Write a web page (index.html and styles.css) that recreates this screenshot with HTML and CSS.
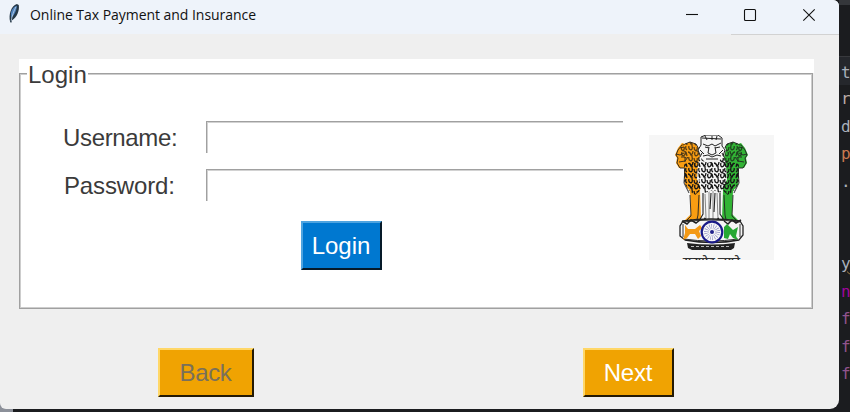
FILE: index.html
```html
<!DOCTYPE html>
<html lang="en">
<head>
<meta charset="utf-8">
<title>Online Tax Payment and Insurance</title>
<link rel="stylesheet" href="styles.css">
</head>
<body>
<main class="window">
  <header class="titlebar">
    <svg class="feather" viewBox="0 0 14 22"><path d="M3 20C1 12 4 3 10 1l2 1c1 6-2 13-7 16l-1 3z" fill="#253746"/><path d="M4 14C3 9 6 4 10 3 10 8 7 13 4 16z" fill="#4f82bd"/><path d="M4 19C5 13 7 8 9 4" fill="none" stroke="#c7d8e7" stroke-width=".8"/></svg>
    <h1 class="title">Online Tax Payment and Insurance</h1>
    <div class="controls">
      <svg viewBox="0 0 12 12"><path d="M0 5.5h12"/></svg>
      <svg viewBox="0 0 12 12"><rect x=".5" y=".5" width="11" height="11" rx="1"/></svg>
      <svg viewBox="0 0 12 12"><path d="M.3.3l11.4 11.4M11.7.3L.3 11.7"/></svg>
    </div>
  </header>
  <section class="panel">
    <fieldset class="group">
      <legend>Login</legend>
      <div class="content">
        <form class="form">
          <label class="row user"><span>Username:</span><input type="text"></label>
          <label class="row pass"><span>Password:</span><input type="password"></label>
          <button class="btn login" type="button">Login</button>
        </form>
        <svg class="emblem" viewBox="0 0 125 125">
          <defs>
            <pattern id="fur" width="13" height="11" patternUnits="userSpaceOnUse">
              <path d="M1 0q-1 3 2 4 2-1 1-4M6 1q0 3 2 4 2-2 1-4M11 0q-1 3 1 4M0 6q2 0 3 3 2-1 2-4M7 6q-1 3 1 4 3-1 2-4M11 6l1 4M4 9v2M9 5l2 1" fill="none" stroke="#151515" stroke-width="1.3"/>
            </pattern>
            <g id="side">
              <path d="M36 9l5-2 6 2 4 7 3 12-3 28 1 28-3 5H36l-2-2 5-5 3-3-1-23-5-6-1-17-5 0-3-5 1-5-2-3 3-7 4-5z"/>
            </g>
            <g id="lines" fill="none" stroke="#222" stroke-width=".9">
              <path d="M36 9l5-2 6 2 3 5M33 10l-4 5-2 5 2 3-1 5 3 5 5 0M27 19l4 1 4-2M30 27l6-1 3-4M31 13l4-1M41 60l1 21-4 4-3 3 9 1 3-5M50 60l-1 20-2 9M32 22h4v5M36 33l-1 15 5 10"/>
            </g>
            <g id="mane">
              <path d="M35 29l14-3 4 9-1 20-6 5-7-5-4-9z" fill="url(#fur)"/>
              <path d="M32 10l9-3 6 2 4 8-1 16-8-1-4-8-6-3z" fill="url(#fur)" opacity=".7"/>
            </g>
          </defs>
          <use href="#side" fill="#f99d12"/>
          <use href="#mane"/>
          <use href="#lines"/>
          <g transform="matrix(-1 0 0 1 125 0)">
            <use href="#side" fill="#32b435"/>
            <use href="#mane"/>
            <use href="#lines"/>
          </g>
          <path d="M52 2l5-2h12l5 3v8l3 3-2 8 2 8 1 15-6 10-1 29H54l-1-28-5-12 1-15 2-8-2-6 3-5z" fill="#f5f5f5"/>
          <path d="M50 21l6 6h13l6-6 3 13-1 15-6 9-7-3-8 3-6-10-1-15z" fill="url(#fur)"/>
          <g fill="none" stroke="#222">
            <path d="M51 20l-2-5 3-5V2l5-2h12l4 3v8l3 4-2 6"/>
            <path d="M53 3l19 1M56 1l2 4M63 1v4M68 1l-1 4M54 9l5 2 4-2 3 2 6-3M56 12l4 1M66 13l5-1M60 12l-1 6 4 2 4-2-1-6M54 21l5-1 4 2 5-2 4 1M57 24h12M51 15l4 4M74 15l-4 4M53 18l-2 4M73 18l2 4"/>
            <path d="M56 59l1 24-5 4M60 57v27M64 56v29M68 58l1 26 4 4" stroke="#888"/>
            <path d="M54 58v21l-5 9M71 58v21l6 9M62 58l-1 16M66 58l-1 19M55 83l5 3M70 83l-4 3" stroke-width="1.1"/>
          </g>
          <path d="M34 86q28-4 57 0l3 5v9l-4 5q-26 5-54 0l-5-4v-10z" fill="#f5f5f5" stroke="#222" stroke-width="1.3"/>
          <path d="M34 87q28-4 57 0M35 104q27 4 54 0M34 89v13M91 89v13" fill="none" stroke="#333"/>
          <path d="M33 86l5 3 4-4 5 3 4-3M75 86l4 3 4-4 4 3 5-3" fill="none" stroke="#222" stroke-width="1.5"/>
          <path d="M36 90l3 4h7l5-4 2 3-3 3 2 5-3 3-3-5h-5l-3 4-4 2 2-7z" fill="#f49a16"/>
          <path d="M75 92l3-3 6 6 5-3-2 9 2 4-5-2-3-4-2 5-4-1z" fill="#27a833"/>
          <path d="M38 108q25 3 48 0l-1 5-3 2H43l-4-2z" fill="#222"/>
          <path d="M42 111.5h39" stroke="#bbb" stroke-dasharray="3 2"/>
          <circle cx="63" cy="97" r="10.3" fill="#f7f7f7" stroke="#1a1a88" stroke-width="2.2"/>
          <circle cx="63" cy="97" r="5.5" fill="none" stroke="#7b7bbb" stroke-width="5" stroke-dasharray=".5 1.4"/>
          <circle cx="63" cy="97" r="2" fill="#22228c"/>
          <text x="34" y="130" class="motto" textLength="57" lengthAdjust="spacingAndGlyphs">सत्यमेव जयते</text>
        </svg>
      </div>
    </fieldset>
  </section>
  <footer class="actions">
    <button class="btn back" type="button" disabled>Back</button>
    <button class="btn next" type="button">Next</button>
  </footer>
</main>
<aside class="editor">
  <span class="current">t</span><span class="warm">r</span><span>d</span><span class="orange">p</span><span>.</span><span></span><span></span><span class="warn">y</span><span class="magenta">n</span><span class="purple">f</span><span class="purple">f</span><span class="purple">f</span>
</aside>
</body>
</html>
```
FILE: styles.css
```css
* { box-sizing: border-box; }
body {
  margin: 0;
  width: 850px;
  height: 412px;
  overflow: hidden;
  display: flex;
  background: linear-gradient(90deg, #8c9099 13px, #1b1c1f 13px);
  font-family: "Liberation Sans", Arial, sans-serif;
}
.window {
  width: 839px;
  height: 409px;
  background: #efefef;
  border-radius: 0 6px 9px 6px;
  overflow: hidden;
}
.titlebar {
  position: relative;
  height: 34px;
  display: flex;
  background: #eef3fa;
  padding-left: 7px;
}
.titlebar::after { content: ""; position: absolute; right: 0; bottom: -1px; width: 108px; height: 1px; background: #d2d2d2; }
.feather { width: 14px; height: 21px; margin-top: 3px; }
.title {
  margin: 0 auto 0 9px;
  font: 400 14px/30px "Open Sans", "Noto Sans", sans-serif;
  color: #111;
  letter-spacing: -.04px;
  white-space: nowrap;
}
.controls {
  width: 153px;
  height: 34px;
  display: flex;
  gap: 46px;
  padding-top: 9px;
}
.controls svg { width: 12px; height: 12px; fill: none; stroke: #111; stroke-width: 1.1; overflow: visible; flex: none; }
.controls svg:last-child { margin-left: 1px; }
.panel {
  width: 795px;
  height: 250px;
  margin: 25px 0 0 19px;
  background: linear-gradient(#fff 14px, transparent 14px);
}
.group {
  margin: 0;
  padding: 0;
  width: 794px;
  height: 250px;
  border: 1px solid #a0a0a0;
  box-shadow: inset 0 0 0 1px #cdcdcd;
  background: #fff;
  color: #3b3b3b;
}
legend {
  margin-left: 7px;
  padding: 0 1px;
  height: 29px;
  font-size: 24px;
  line-height: 31px;
  background: #fff;
}
.content { display: flex; align-items: flex-start; }
.form { width: 629px; padding: 33px 0 0 43px; }
.row { display: flex; height: 47.5px; }
.row span { width: 143px; font-size: 24px; line-height: 34px; white-space: nowrap; }
.user span { letter-spacing: -.35px; }
.pass span { padding-left: 1px; letter-spacing: -.15px; }
input {
  width: 417px;
  height: 32px;
  margin: 0;
  padding: 0 4px;
  border: solid #a0a0a0;
  border-width: 1px 0 0 1px;
  box-shadow: inset 1px 1px #d2d2d2;
  outline: 0;
  font-size: 24px;
}
.btn {
  display: block;
  height: 49px;
  padding: 0;
  border: 2px solid;
  font: 24px "Liberation Sans", Arial, sans-serif;
}
.login { width: 81px; padding-right: 1px; margin: 5px 0 0 238px; background: #0078d0; color: #fff; border-color: #4fa4e0 #061a29 #061a29 #4fa4e0; }
.emblem { width: 125px; height: 125px; margin-top: 47px; background: #f6f6f6; overflow: hidden; }
.motto { font-size: 11px; fill: #222; stroke: #222; stroke-width: .3px; }
.actions { display: flex; justify-content: space-between; padding: 39px 165px 0 158px; }
.back, .next { background: #f0a302; border-color: #ffd767 #241a04 #241a04 #ffd767; padding-right: 1px; }
.back { width: 96px; color: #79705b; letter-spacing: -.35px; }
.next { width: 91px; color: #fff; letter-spacing: -.2px; }
.editor {
  width: 11px;
  height: 409px;
  padding-top: 56px;
  background: linear-gradient(#35373b 5px, #1b1c1f 5px);
  color: #a9b0bb;
  font: 16px/27.5px "DejaVu Sans Mono", monospace;
}
.editor span { display: block; height: 27.5px; padding-left: 2px; }
.editor .current { background: #25272c; border-top: 1px solid #38393d; height: 29px; line-height: 31px; }
.editor .warm { color: #bcaea9; }
.editor .orange { color: #c77850; }
.editor .warn { text-decoration: underline wavy #a38145 1px; }
.editor .magenta { color: #a0059c; }
.editor .purple { color: #91538c; }
```
